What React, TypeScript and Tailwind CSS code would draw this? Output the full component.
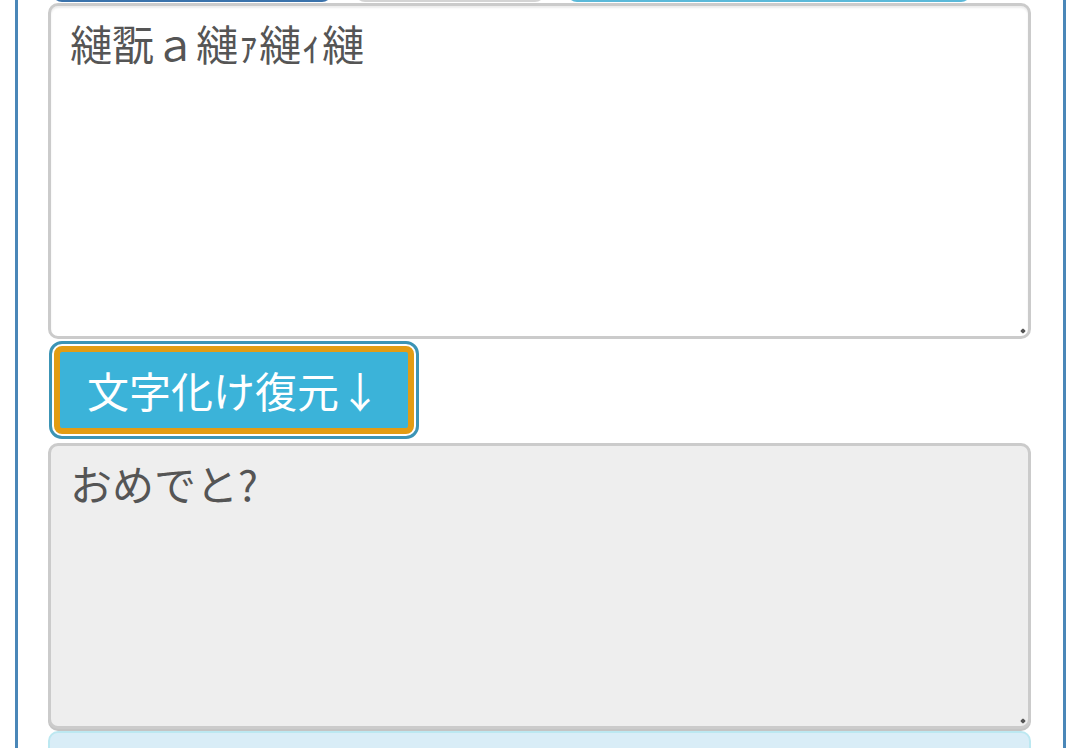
const jp = { fontFamily: '"Noto Sans CJK JP", "Noto Sans", sans-serif' };

function Grip() {
  return <span className="pointer-events-none absolute bottom-[6px] right-[6px] h-[4px] w-[4px] rotate-45 rounded-[1px] bg-[#555555]" />;
}

export default function App() {
  return (
    <div className="h-[748px] overflow-hidden bg-white" style={jp}>
      <div className="ml-[15px] mr-[14px] min-h-[800px] border-x-[3px] border-[#4a87b8] pl-[30px] pr-[32px]">
        {/* buttons row, scrolled mostly out of view */}
        <div className="-mt-[86px] flex h-[88px] items-stretch">
          <button className="ml-[4px] w-[280px] rounded-[10px] bg-[#3a72ab]" />
          <button className="ml-[23px] w-[190px] rounded-[10px] border-2 border-[#d4d4d4] bg-[#e6e6e6]" />
          <button className="ml-[22px] w-[404px] rounded-[10px] bg-[#5bb9d9]" />
        </div>

        <div className="relative mt-[1px]">
          <textarea
            className="block h-[336px] w-full resize-none rounded-[10px] border-[3px] border-[#cbcbcb] bg-white px-[19px] py-[8px] text-[42px] leading-[58px] text-[#555555] shadow-[inset_0_2px_2px_rgba(0,0,0,0.08)] outline-none"
            style={jp}
            defaultValue="縺翫ａ縺ｧ縺ｨ縺"
          />
          <Grip />
        </div>

        <button
          className="ml-[6px] mt-[7px] block h-[88px] w-[360px] rounded-[8px] border-[6px] border-[#e39c13] bg-[#3bb3d9] text-[42px] leading-none text-white outline-[3px] outline-offset-[2px] outline-[#3c94b5] outline-solid"
          style={jp}
        >
          文字化け復元↓
        </button>

        <div className="relative mt-[9px]">
          <textarea
            readOnly
            className="block h-[286px] w-full resize-none rounded-[10px] border-[3px] border-[#cbcbcb] bg-[#eeeeee] px-[19px] py-[8px] text-[42px] leading-[58px] text-[#555555] shadow-[0_2px_0_#c4c4c4] outline-none"
            style={jp}
            defaultValue="おめでと?"
          />
          <Grip />
        </div>

        <div className="mt-[2px] h-[120px] rounded-[10px] border-2 border-[#bce8f1] bg-[#d9edf7]" />
      </div>
    </div>
  );
}
